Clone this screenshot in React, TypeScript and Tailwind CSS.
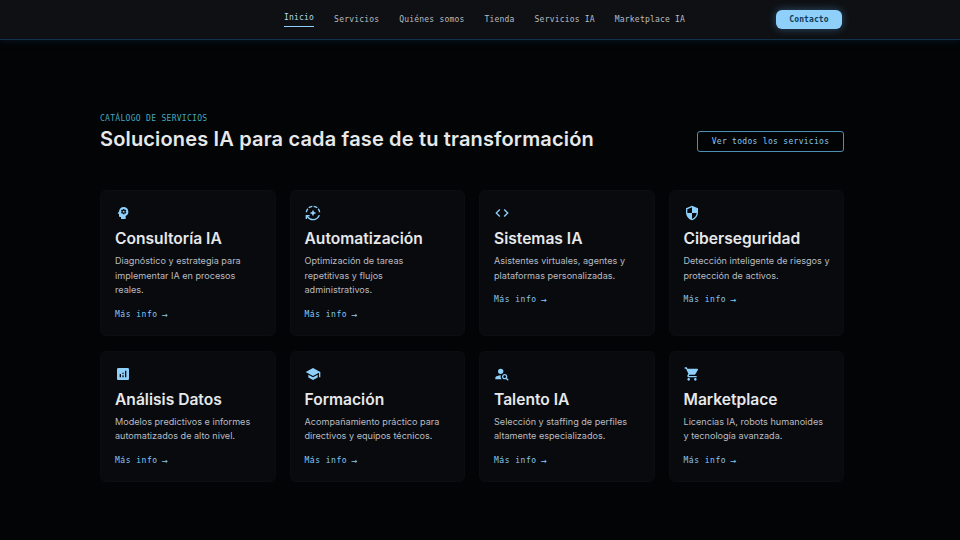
import { MdPsychology, MdAutoMode, MdCode, MdSecurity, MdAnalytics, MdSchool, MdPersonSearch, MdShoppingCart } from "react-icons/md";
import type { IconType } from "react-icons";

const nav = ["Inicio", "Servicios", "Quiénes somos", "Tienda", "Servicios IA", "Marketplace IA"];
const mono = "font-['DejaVu_Sans_Mono','Liberation_Mono',monospace]";

type Card = { icon: IconType; title: string; lines: string[] };
const cards: Card[] = [
  { icon: MdPsychology, title: "Consultoría IA", lines: ["Diagnóstico y estrategia para", "implementar IA en procesos", "reales."] },
  { icon: MdAutoMode, title: "Automatización", lines: ["Optimización de tareas", "repetitivas y flujos", "administrativos."] },
  { icon: MdCode, title: "Sistemas IA", lines: ["Asistentes virtuales, agentes y", "plataformas personalizadas."] },
  { icon: MdSecurity, title: "Ciberseguridad", lines: ["Detección inteligente de riesgos y", "protección de activos."] },
  { icon: MdAnalytics, title: "Análisis Datos", lines: ["Modelos predictivos e informes", "automatizados de alto nivel."] },
  { icon: MdSchool, title: "Formación", lines: ["Acompañamiento práctico para", "directivos y equipos técnicos."] },
  { icon: MdPersonSearch, title: "Talento IA", lines: ["Selección y staffing de perfiles", "altamente especializados."] },
  { icon: MdShoppingCart, title: "Marketplace", lines: ["Licencias IA, robots humanoides", "y tecnología avanzada."] },
];

function ServiceCard({ card }: { card: Card }) {
  const Icon = card.icon;
  return (
    <div className="rounded-md bg-[#090a0e] border border-[#0b0d11] px-[14px] pt-[14px] pb-[15px]">
      <Icon className="text-[#8fd0fb] text-[16px]" />
      <h3 className="mt-[8px] text-[15.6px] leading-[20px] font-semibold text-[#e6e8ea]">{card.title}</h3>
      <p className="mt-[5px] text-[9.1px] leading-[14.5px] text-[#b8bcc0] whitespace-nowrap">
        {card.lines.map((l) => <span key={l} className="block">{l}</span>)}
      </p>
      <div className={`${mono} mt-[12px] text-[8px] leading-[10px] tracking-[0.5px] text-[#8ac8ee] flex items-center gap-[4px]`}>
        <span>Más info</span>
        <span className="text-[10px]">→</span>
      </div>
    </div>
  );
}

export default function App() {
  return (
    <div className="w-[960px] h-[540px] overflow-hidden bg-[#030405] font-['Inter','Liberation_Sans',sans-serif]">
      <header className="h-[40px] bg-[#0e1013] border-b border-[#10324d] flex items-center shadow-[0_2px_8px_rgba(20,80,130,0.2)]">
        <nav className={`${mono} ml-[284px] flex items-center gap-[20px] text-[8px] tracking-[0.2px] text-[#b9bdc1]`}>
          {nav.map((n, i) => (
            <span key={n} className={i === 0 ? "text-[#b5d9f0] border-b border-[#8fd0fb] pb-[2px]" : ""}>{n}</span>
          ))}
        </nav>
        <button className={`${mono} ml-[91px] h-[19px] w-[66px] rounded-md bg-[#8fd0fb] text-[#0d3a5c] text-[8px] font-bold tracking-[0.1px] shadow-[0_0_8px_rgba(100,180,250,0.4)]`}>
          Contacto
        </button>
      </header>
      <main className="w-[744px] ml-[100px]">
        <div className="mt-[73px] flex items-end justify-between">
          <div>
            <div className={`${mono} text-[8px] leading-[12px] tracking-[0.3px] text-[#46a8bd]`}>CATÁLOGO DE SERVICIOS</div>
            <h1 className="text-[20px] leading-[28px] font-semibold tracking-[0.16px] text-[#e6e8ea]">Soluciones IA para cada fase de tu transformación</h1>
          </div>
          <button className={`${mono} mb-[1px] h-[21px] w-[147px] rounded-[3px] border border-[#4f8fb3] text-[#8ac8ee] text-[8px] tracking-[0.3px]`}>
            Ver todos los servicios
          </button>
        </div>
        <div className="mt-[37px] grid grid-cols-4 gap-x-[14px] gap-y-[15px]">
          {cards.map((c) => <ServiceCard key={c.title} card={c} />)}
        </div>
      </main>
    </div>
  );
}
